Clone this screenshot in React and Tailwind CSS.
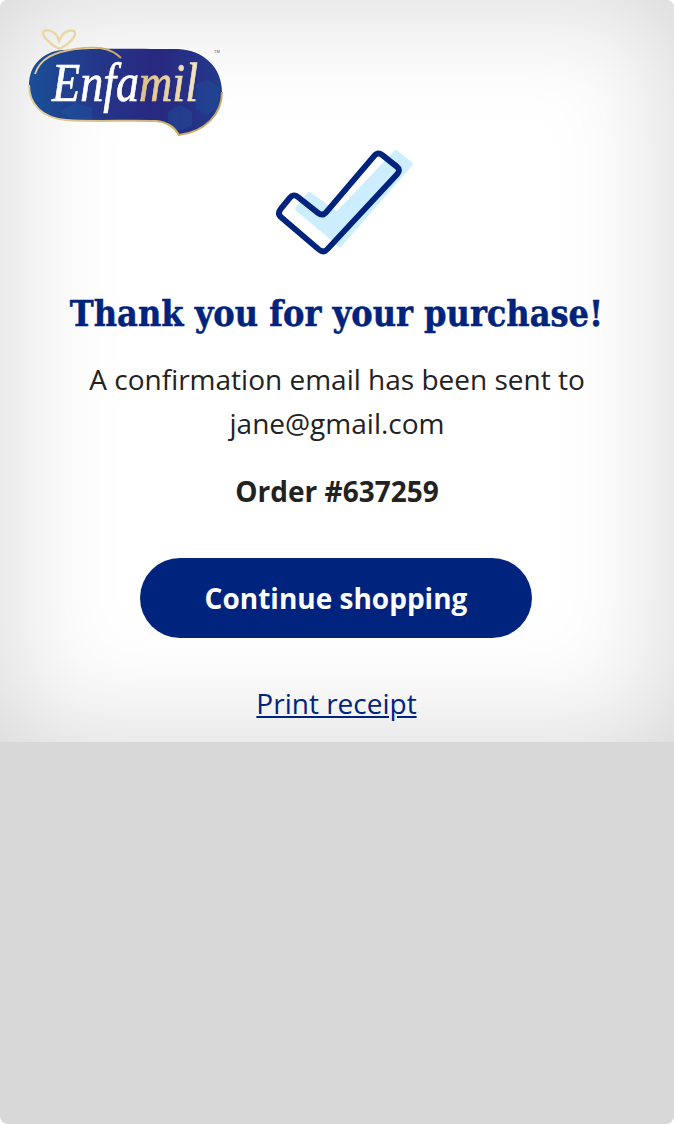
function EnfamilLogo() {
  return (
    <svg width="200" height="112" viewBox="26 27 200 112" className="block">
      <defs>
        <linearGradient id="blob" x1="0" y1="0" x2="1" y2="0">
          <stop offset="0" stopColor="#1b4f98" />
          <stop offset="0.3" stopColor="#233a8c" />
          <stop offset="0.65" stopColor="#28287f" />
          <stop offset="1" stopColor="#233a8c" />
        </linearGradient>
        <linearGradient id="gold" x1="0" y1="0" x2="1" y2="0">
          <stop offset="0" stopColor="#e6cf94" />
          <stop offset="1" stopColor="#c9a661" />
        </linearGradient>
        <linearGradient id="word" x1="52" y1="0" x2="198" y2="0" gradientUnits="userSpaceOnUse">
          <stop offset="0" stopColor="#ffffff" />
          <stop offset="0.58" stopColor="#ffffff" />
          <stop offset="0.62" stopColor="#dcc288" />
          <stop offset="1" stopColor="#f3e6c2" />
        </linearGradient>
      </defs>
      <path
        d="M62 50 C100 48 145 49 178 49 C204 50 222 68 222 92 C222 114 208 130 179 135 C175 128 168 122 156 121 C125 120 95 122 66 120 C42 118 29 104 29 85 C29 66 42 52 62 50 Z"
        fill="url(#blob)"
      />
      <path d="M60 112 L75 103 L92 108 L92 119 L72 119 Z" fill="#1d5fa3" opacity="0.35" />
      <path d="M168 112 L180 105 L192 112 L192 125 L180 131 L168 125 Z" fill="#1d5fa3" opacity="0.3" />
      <path d="M196 84 L208 80 L220 88 L218 108 L206 116 L196 108 Z" fill="#1d5fa3" opacity="0.25" />
      <path
        d="M35 74 C40 58 55 52 75 49 C95 46 110 47 121 58"
        fill="none"
        stroke="url(#gold)"
        strokeWidth="1.8"
      />
      <path
        d="M29 85 C29 104 42 118 66 120 C95 122 125 120 156 121 C168 122 175 128 179 135 C205 132 222 114 222 92"
        fill="none"
        stroke="url(#gold)"
        strokeWidth="2"
      />
      <path
        d="M59 49 C50 44 43 37 43 33 C44 29 52 29 57 36 L59 41 C62 33 68 29 74 31 C78 35 70 44 59 49 Z"
        fill="none"
        stroke="#e9d6a3"
        strokeWidth="2.4"
      />
      <text
        x="52"
        y="101"
        textLength="146"
        lengthAdjust="spacingAndGlyphs"
        fontFamily="'Liberation Serif', serif"
        fontStyle="italic"
        fontSize="54"
        fill="url(#word)"
        stroke="url(#word)"
        strokeWidth="0.7"
      >
        Enfamil
      </text>
      <text x="214" y="53" fontFamily="'Liberation Sans', sans-serif" fontSize="4" fill="#4a5a90">TM</text>
    </svg>
  )
}

function CheckMark() {
  return (
    <svg width="166" height="115" viewBox="254 145 166 115" className="block">
      <path
        d="M396 152 L411 164 L340 245 L297 209 L309 194 L337 214 Z"
        fill="#cdeeff"
        stroke="#cdeeff"
        strokeWidth="4"
        strokeLinejoin="round"
      />
      <path
        transform="translate(339 202) scale(0.97) translate(-339 -202)"
        d="M375.1 154.6 Q379 150 383.7 153.7 L398.3 165.3 Q403 169 398.9 173.4 L327.1 250.6 Q323 255 318.4 251.1 L279.6 217.9 Q275 214 278.8 209.3 L288.2 197.7 Q292 193 296.7 196.8 L317.3 213.2 Q322 217 325.9 212.4 Z"
        fill="none"
        stroke="#00247d"
        strokeWidth="6"
        strokeLinejoin="round"
      />
    </svg>
  )
}

export default function App() {
  return (
    <div className="h-[1124px] w-[674px] overflow-hidden rounded-lg bg-[#d8d8d8] font-['Open_Sans',sans-serif]">
      <div className="flex h-[742px] flex-col bg-white shadow-[inset_0_0_120px_rgba(0,0,0,0.17)]">
        <div className="pl-[26px] pt-[27px]">
          <EnfamilLogo />
        </div>
        <div className="mt-[6px] flex justify-center">
          <CheckMark />
        </div>
        <h1 className="mt-[31px] mr-[1px] text-center font-['DejaVu_Serif_Condensed','DejaVu_Serif',serif] text-[35.7px] leading-[44px] font-bold text-[#00247d] [-webkit-text-stroke:0.5px_#00247d]">
          Thank you for your purchase!
        </h1>
        <p className="mt-[22px] text-center text-[28px] leading-[44px] text-[#222222]">
          A confirmation email has been sent to
          <br />
          jane@gmail.com
        </p>
        <p className="mt-[24px] text-center text-[28px] leading-[44px] font-bold text-[#222222]">Order #637259</p>
        <div className="mt-[45px] flex justify-center">
          <button className="mr-[2px] h-[80px] w-[392px] rounded-[40px] bg-[#00247d] text-[28px] font-bold text-white">
            Continue shopping
          </button>
        </div>
        <div className="mt-[43px] mr-[1px] text-center">
          <a href="#" className="text-[28px] leading-[44px] text-[#00247d] underline">
            Print receipt
          </a>
        </div>
      </div>
    </div>
  )
}
